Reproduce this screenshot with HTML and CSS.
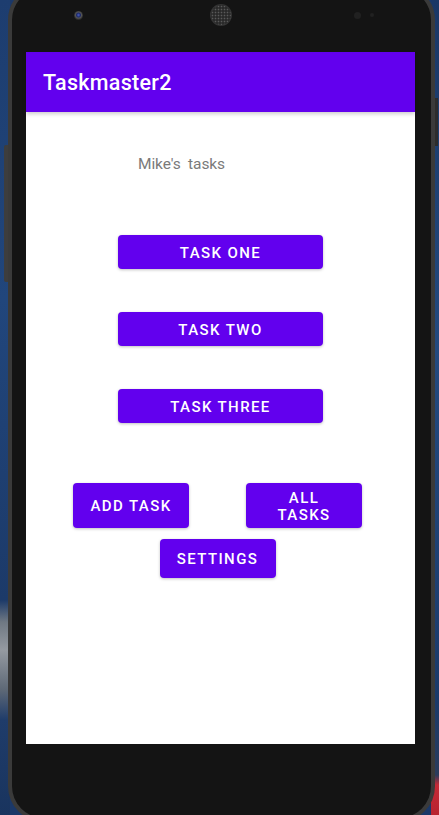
FILE: index.html
```html
<!DOCTYPE html>
<html lang="en">
<head>
  <meta charset="UTF-8">
  <meta name="viewport" content="width=device-width, initial-scale=1.0">
  <title>Taskmaster2</title>
  <link rel="stylesheet" href="styles.css">
</head>
<body>
  <div class="phone">
    <div class="side-btn left"></div>
    <div class="side-btn right"></div>
    <div class="bezel-top">
      <span class="camera"></span>
      <span class="speaker"></span>
      <span class="sensor big"></span>
      <span class="sensor small"></span>
    </div>
    <div class="screen">
      <div class="app-bar">
        <h1>Taskmaster2</h1>
      </div>
      <div class="content">
        <p class="owner">Mike's&nbsp; tasks</p>
        <div class="task-list">
          <button class="btn task">Task One</button>
          <button class="btn task">Task Two</button>
          <button class="btn task">Task Three</button>
        </div>
        <div class="actions">
          <div class="action-row">
            <button class="btn action">Add Task</button>
            <button class="btn action">All<br>Tasks</button>
          </div>
          <button class="btn settings">Settings</button>
        </div>
      </div>
    </div>
  </div>
</body>
</html>
```

FILE: styles.css
```css
body {
    margin: 0;
    height: 815px;
    overflow: hidden;
    font-family: Roboto, "Noto Sans", sans-serif;
    background:
        linear-gradient(to bottom, #1d3d6f 0, #21467c 300px, #1c3a69 600px, #6f7883 622px, #959aa1 650px, #5d6876 690px, #1f3c6a 720px, #19345e 815px) left top / 10px 100% no-repeat,
        linear-gradient(to bottom, #1a3766 0, #234a80 350px, #1b3a6a 700px, #2a3c5c 775px, #c42a36 785px, #b8232f 815px) right top / 8px 100% no-repeat,
        #1b3868;
}

.phone {
    position: relative;
    box-sizing: border-box;
    width: 427px;
    margin: -16px 0 0 8px;
    height: 838px;
    background-color: #141414;
    border: 4px solid #3a3a3a;
    border-radius: 36px;
}

.side-btn {
    position: absolute;
    background-color: #3d3d3d;
}

.side-btn.left {
    left: -8px;
    top: 157px;
    width: 4px;
    height: 137px;
    border-radius: 2px 0 0 2px;
}

.side-btn.right {
    right: -7px;
    top: 110px;
    width: 3px;
    height: 48px;
    background-color: #2c2c2c;
}

.bezel-top {
    height: 64px;
    display: flex;
    align-items: center;
    padding-bottom: 10px;
    box-sizing: border-box;
}

.camera {
    width: 9px;
    height: 9px;
    margin-left: 62px;
    border-radius: 50%;
    background: radial-gradient(circle at 50% 45%, #4b5fc4 0, #1d2a66 2px, #555 3px, #2b2b2b 4.5px);
}

.speaker {
    width: 20px;
    height: 20px;
    margin-left: 128px;
    border-radius: 50%;
    background: radial-gradient(circle, #5a5a5a 0.7px, transparent 1.1px) 0 0 / 3px 3px, #2a2a2a;
    box-shadow: 0 0 0 1px #333;
}

.sensor {
    border-radius: 50%;
    background-color: #212121;
}

.sensor.big {
    width: 7px;
    height: 7px;
    margin-left: 123px;
}

.sensor.small {
    width: 4px;
    height: 4px;
    margin-left: 9px;
}

.screen {
    width: 389px;
    height: 692px;
    margin-left: 14px;
    background-color: #fff;
}

.app-bar {
    height: 60px;
    background-color: #6200ee;
    display: flex;
    align-items: center;
    padding-left: 17px;
    box-shadow: 0 2px 4px rgba(0, 0, 0, 0.2);
    position: relative;
}

.app-bar h1 {
    margin: 0;
    color: #fff;
    font-size: 21.5px;
    font-weight: 500;
    letter-spacing: 0.3px;
}

.content {
    display: flex;
    flex-direction: column;
}

.owner {
    margin: 43px 0 0 112px;
    font-size: 15.5px;
    color: #7a7a7a;
    letter-spacing: -0.1px;
}

.btn {
    border: none;
    border-radius: 4px;
    background-color: #6200ee;
    color: #fff;
    font-family: Roboto, "Noto Sans", sans-serif;
    font-size: 15px;
    font-weight: 500;
    letter-spacing: 1.4px;
    text-transform: uppercase;
    box-shadow: 0 1px 3px rgba(0, 0, 0, 0.25);
    padding: 2px 0 0;
    line-height: 17px;
}

.task-list {
    display: flex;
    flex-direction: column;
    align-items: center;
    gap: 43px;
    margin-top: 62px;
}

.task {
    width: 205px;
    height: 34px;
}

.actions {
    display: flex;
    flex-direction: column;
    align-items: center;
    gap: 11px;
    margin: 60px 6px 0 0;
}

.action-row {
    display: flex;
    gap: 57px;
}

.action {
    width: 116px;
    height: 45px;
}

.settings {
    width: 116px;
    height: 39px;
}
```
